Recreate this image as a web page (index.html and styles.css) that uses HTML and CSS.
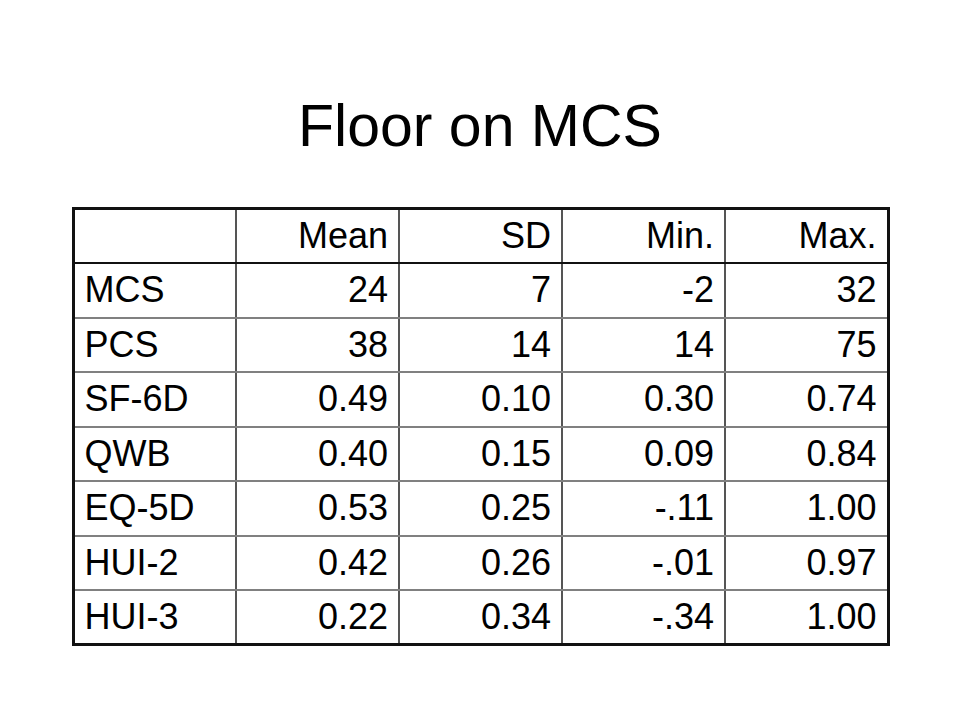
FILE: index.html
```html
<!DOCTYPE html>
<html>
<head>
<meta charset="utf-8">
<link rel="stylesheet" href="styles.css">
</head>
<body>
<div class="slide">
  <h1 class="title">Floor on MCS</h1>
  <table class="stats">
    <thead>
      <tr class="head"><th></th><th>Mean</th><th>SD</th><th>Min.</th><th>Max.</th></tr>
    </thead>
    <tbody>
      <tr><td>MCS</td><td>24</td><td>7</td><td>-2</td><td>32</td></tr>
      <tr><td>PCS</td><td>38</td><td>14</td><td>14</td><td>75</td></tr>
      <tr><td>SF-6D</td><td>0.49</td><td>0.10</td><td>0.30</td><td>0.74</td></tr>
      <tr><td>QWB</td><td>0.40</td><td>0.15</td><td>0.09</td><td>0.84</td></tr>
      <tr><td>EQ-5D</td><td>0.53</td><td>0.25</td><td>-.11</td><td>1.00</td></tr>
      <tr><td>HUI-2</td><td>0.42</td><td>0.26</td><td>-.01</td><td>0.97</td></tr>
      <tr><td>HUI-3</td><td>0.22</td><td>0.34</td><td>-.34</td><td>1.00</td></tr>
    </tbody>
  </table>
</div>
</body>
</html>
```
FILE: styles.css
```css
html, body {
  margin: 0;
  padding: 0;
  background: #ffffff;
}
.slide {
  width: 960px;
  height: 720px;
  font-family: "Liberation Sans", Arial, sans-serif;
  color: #000;
  display: flex;
  flex-direction: column;
  align-items: center;
}
.title {
  margin: 0;
  padding-top: 97px;
  font-size: 59px;
  line-height: 59px;
  font-weight: normal;
  text-align: center;
}
.stats {
  margin-top: 51px;
  margin-left: 1px;
  width: 818px;
  table-layout: fixed;
  border-collapse: collapse;
  border: 3px solid #111;
  font-size: 36px;
}
.stats th, .stats td {
  height: 54.5px;
  padding: 0 10px;
  font-weight: normal;
  text-align: right;
  border-left: 2px solid #555;
  border-right: 2px solid #555;
  border-bottom: 2px solid #808080;
  line-height: 1;
  vertical-align: middle;
  box-sizing: border-box;
}
.stats td:first-child {
  text-align: left;
  border-left: 3px solid #111;
}
.stats th:first-child {
  border-left: 3px solid #111;
}
.stats th:last-child, .stats td:last-child {
  border-right: 3px solid #111;
}
.stats .head th {
  border-bottom: 2px solid #111;
  border-top: 3px solid #111;
}
.stats tbody tr:last-child td {
  border-bottom: 3px solid #111;
}
```
